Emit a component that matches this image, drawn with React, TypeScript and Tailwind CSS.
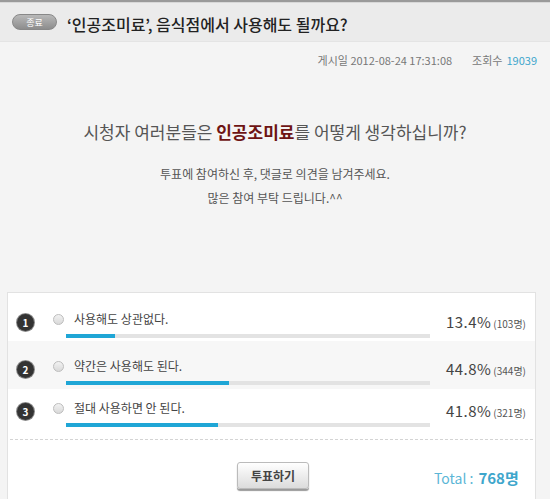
import React from "react";

const rows = [
  { n: 1, label: "사용해도 상관없다.", pct: 13.4, cnt: 103, bg: "bg-white", h: "h-[48px]", pt: "pt-[20px]" },
  { n: 2, label: "약간은 사용해도 된다.", pct: 44.8, cnt: 344, bg: "bg-[#f7f7f7]", h: "h-[48px]", pt: "pt-[19px]" },
  { n: 3, label: "절대 사용하면 안 된다.", pct: 41.8, cnt: 321, bg: "bg-white", h: "h-[48px]", pt: "pt-[13px]" },
];

export default function App() {
  return (
    <div
      className="w-[550px] h-[499px] overflow-hidden bg-[#f4f4f4] text-[#333]"
      style={{ fontFamily: '"Noto Sans CJK KR", "Noto Sans", sans-serif' }}
    >
      <div className="h-[2px] bg-[#9a9a9a]" />
      <div className="h-[1px] bg-[#d8d8d8]" />
      <div className="h-[39px] bg-[#ebebeb] flex items-center pl-[12px] border-b border-[#e4e4e4]">
        <span className="w-[45px] h-[16px] rounded-full bg-gradient-to-b from-[#b9b9b9] to-[#8d8d8d] border border-[#888] flex items-center justify-center text-[9px] leading-none text-white">
          종료
        </span>
        <span className="ml-[10px] mt-[3px] text-[16px] leading-none text-[#222] font-medium">
          ‘인공조미료’, 음식점에서 사용해도 될까요?
        </span>
      </div>

      <div className="flex justify-end items-center pr-[13px] pt-[13px] text-[11px] leading-none text-[#777]">
        <span>게시일 2012-08-24 17:31:08</span>
        <span className="ml-[20px]">조회수</span>
        <span className="ml-[4px] text-[#3ea6cc]">19039</span>
      </div>

      <div className="mt-[57px] text-center text-[17px] leading-none text-[#555]">
        시청자 여러분들은 <b className="text-[#6e1414] font-bold">인공조미료</b>를 어떻게 생각하십니까?
      </div>
      <div className="mt-[22px] text-center text-[12px] leading-[24px] text-[#555]">
        <div>투표에 참여하신 후, 댓글로 의견을 남겨주세요.</div>
        <div>많은 참여 부탁 드립니다.^^</div>
      </div>

      <div className="mt-[82px] ml-[7px] w-[529px] h-[220px] bg-white border border-[#e2e2e2]">
        {rows.map((r) => (
          <div key={r.n} className={`${r.bg} ${r.h} ${r.pt} flex pl-[9px] pr-[9px]`}>
            <div className="w-[17px] h-[17px] mt-[1px] rounded-full bg-[#333] ring-1 ring-[#888] text-white text-[10px] font-bold leading-none flex items-center justify-center shrink-0">
              {r.n}
            </div>
            <div className="flex flex-col ml-[19px] w-[379px]">
              <div className="flex items-center h-[12px]">
                <span className="w-[11px] h-[11px] rounded-full border border-[#bdbdbd] bg-gradient-to-b from-[#f2f2f2] to-[#d9d9d9] shrink-0" />
                <span className="ml-[10px] text-[12px] leading-none text-[#444]">{r.label}</span>
              </div>
              <div className="mt-[9px] ml-[13px] w-[364px] h-[4px] bg-[#e3e3e3]">
                <div className="h-full bg-[#1fa6d6]" style={{ width: `${r.pct}%` }} />
              </div>
            </div>
            <div className="ml-auto flex items-baseline mt-[1px]">
              <span className="text-[15px] leading-none text-[#444] tracking-[0.5px]">{r.pct}%</span>
              <span className="ml-[2px] text-[10px] leading-none text-[#555]">({r.cnt}명)</span>
            </div>
          </div>
        ))}
        <div className="mx-[2px] border-t border-dashed border-[#d4d4d4] mt-[2px]" />
        <div className="relative h-[60px]">
          <button className="absolute left-[229px] top-[22px] w-[72px] h-[27px] rounded-[3px] border border-[#bbb] bg-gradient-to-b from-[#ffffff] to-[#dcdcdc] shadow-[0_2px_1px_#9a9a9a] text-[12px] font-bold text-[#444] leading-none">
            투표하기
          </button>
          <div className="absolute left-[426px] top-[30px] flex items-baseline text-[#3ea6cc] leading-none">
            <span className="text-[14px] text-[#5bb6d6]">Total :</span>
            <span className="ml-[5px] text-[15px] font-bold">768명</span>
          </div>
        </div>
      </div>
    </div>
  );
}
